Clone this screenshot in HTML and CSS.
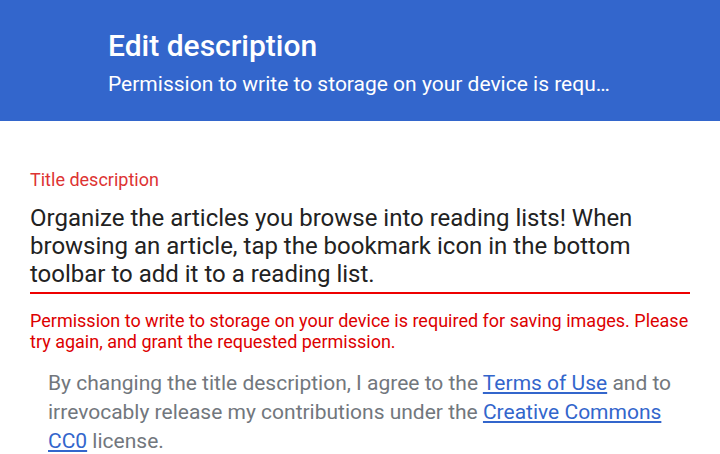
FILE: index.html
```html
<!DOCTYPE html>
<html>
<head>
<meta charset="utf-8">
<link rel="stylesheet" href="styles.css">
</head>
<body>
<header class="toolbar">
  <div class="title">Edit description</div>
  <div class="subtitle">Permission to write to storage on your device is requ…</div>
</header>
<main class="content">
  <div class="label">Title description</div>
  <div class="field">Organize the articles you browse into reading lists! When browsing an article, tap the bookmark icon in the bottom toolbar to add it to a reading list.</div>
  <div class="error">Permission to write to storage on your device is required for saving images. Please try again, and grant the requested permission.</div>
  <p class="license">By changing the title description, I agree to the <a href="#">Terms of Use</a> and to irrevocably release my contributions under the <a href="#">Creative Commons CC0</a> license.</p>
</main>
</body>
</html>
```
FILE: styles.css
```css
html, body { margin: 0; padding: 0; }
body { font-family: Roboto, "Noto Sans", sans-serif; background: #fff; width: 720px; height: 454px; overflow: hidden; }
.toolbar { background: #3366cc; height: 121px; box-sizing: border-box; padding: 28px 0 0 108px; color: #fff; }
.title { font-size: 30px; font-weight: 500; line-height: 36px; }
.subtitle { font-size: 21px; line-height: 28px; margin-top: 6px; white-space: nowrap; }
.content { padding: 0 30px; }
.label { color: #d33; font-size: 18px; line-height: 22px; margin-top: 48px; }
.field { color: #222; font-size: 24px; line-height: 28px; margin-top: 13px; padding-bottom: 4px; border-bottom: 2px solid #e00; }
.error { color: #d00; font-size: 18px; line-height: 21px; margin-top: 16px; }
.license { color: #72777d; font-size: 21px; line-height: 29px; margin: 17px 0 0 18px; }
.license a { color: #3366cc; }
```
